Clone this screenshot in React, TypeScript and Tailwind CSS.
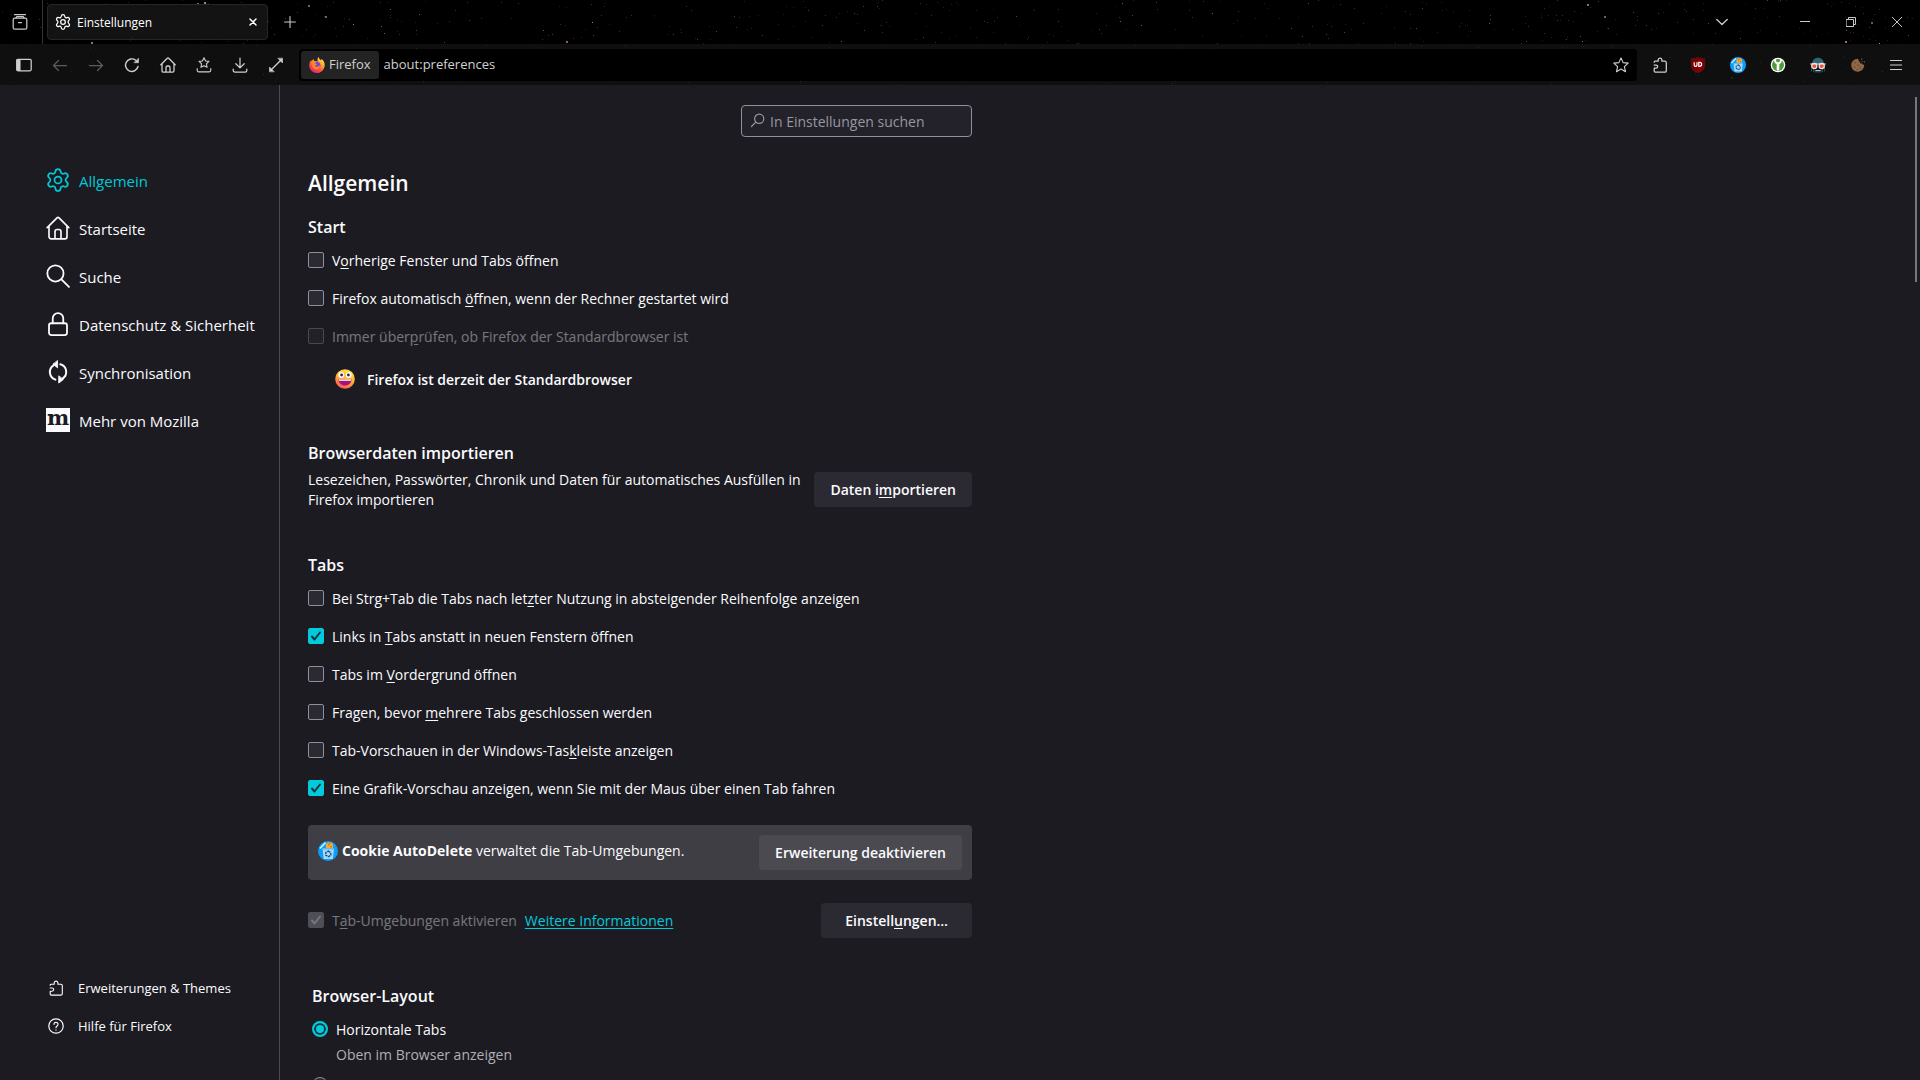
import type { ReactNode } from "react";

type IconProps = { className?: string };

function Line({ className = "size-4", width = 1.25, box = "0 0 16 16", children }: { className?: string; width?: number; box?: string; children: ReactNode }) {
  return (
    <svg viewBox={box} className={className} fill="none" stroke="currentColor" strokeWidth={width} strokeLinecap="round" strokeLinejoin="round" aria-hidden="true">
      {children}
    </svg>
  );
}

/* ---------- line icons ---------- */

const GearIcon = ({ className, width = 1.9 }: IconProps & { width?: number }) => (
  <Line className={className} width={width} box="1 1 22 22">
    <path d="M9.671 4.136a2.34 2.34 0 0 1 4.659 0 2.34 2.34 0 0 0 3.319 1.915 2.34 2.34 0 0 1 2.33 4.033 2.34 2.34 0 0 0 0 3.831 2.34 2.34 0 0 1-2.33 4.033 2.34 2.34 0 0 0-3.319 1.915 2.34 2.34 0 0 1-4.659 0 2.34 2.34 0 0 0-3.32-1.915 2.34 2.34 0 0 1-2.33-4.033 2.34 2.34 0 0 0 0-3.831A2.34 2.34 0 0 1 6.35 6.051a2.34 2.34 0 0 0 3.319-1.915" />
    <circle cx="12" cy="12" r="3.2" />
  </Line>
);
const HomeIcon = ({ className, width = 1.3 }: IconProps & { width?: number }) => (
  <Line className={className} width={width}>
    <path d="M.8 7.7 7.3 1.2a1 1 0 0 1 1.4 0l6.5 6.5M2 6.8v7a1.4 1.4 0 0 0 1.4 1.4h9.2a1.4 1.4 0 0 0 1.4-1.4v-7M6 15v-4.500a1.500 1.500 0 0 1 1.500-1.500h1a1.500 1.500 0 0 1 1.500 1.500V15" />
  </Line>
);
const SearchIcon = ({ className }: IconProps) => (
  <Line className={className} width={1.2}>
    <circle cx="6.300" cy="6.300" r="5.400" />
    <path d="m10.300 10.300 5 5" />
  </Line>
);
const LockIcon = ({ className }: IconProps) => (
  <Line className={className} width={1.2}>
    <path d="M4.500 7.500V4.200a3.500 3.500 0 0 1 7 0v3.300" />
    <rect x="2" y="7.500" width="12" height="7.900" rx="1.500" />
  </Line>
);
const SyncIcon = ({ className }: IconProps) => (
  <Line className={className} width={1.3}>
    <path d="M5 3.600a5.300 5.300 0 0 0 1.300 9.500M11 12.400A5.300 5.300 0 0 0 9.500 2.800" />
    <path d="M7.700.6v4.600L4.800 2.900zM8.500 10.800v4.600l2.900-2.300z" fill="currentColor" strokeWidth=".6" />
  </Line>
);
const PuzzleIcon = ({ className, width = 1.25 }: IconProps & { width?: number }) => (
  <Line className={className} width={width}>
    <path d="M2.200 5.200a1 1 0 0 1 1-1h3V2.600a1.900 1.900 0 0 1 3.700 0v1.600h3a1.400 1.400 0 0 1 1.400 1.400v8.200a1.300 1.300 0 0 1-1.300 1.300H3.200a1 1 0 0 1-1-1v-2.900h1.900a1.600 1.600 0 0 0 0-3.200H2.200" />
  </Line>
);
const HelpIcon = ({ className }: IconProps) => (
  <Line className={className} width={1.2}>
    <circle cx="8" cy="8" r="7.200" />
    <path d="M6 6.300a2 2 0 1 1 3.200 1.600c-.8.600-1.200.8-1.200 1.800M8 11.900v.2" />
  </Line>
);
const MozillaIcon = () => (
  <span className="flex size-6 shrink-0 justify-center bg-[#fbfbfe] font-['DejaVu_Serif',serif] text-[21px] leading-5 font-bold text-[#1c1b22]" aria-hidden="true">
    m
  </span>
);
const StarIcon = ({ className }: IconProps) => (
  <Line className={className} width={1.1}>
    <path d="m8 .9 2.100 4.700 5.100.5-3.800 3.500 1.100 5.100L8 12.100l-4.500 2.600 1.100-5.100L.8 6.100l5.100-.5z" />
  </Line>
);
const RecentIcon = () => (
  <Line className="size-4">
    <path d="M2.500.7h11" />
    <rect x="1.200" y="4.200" width="13.600" height="11" rx="1.500" />
    <path d="M6.500 8.500h3M4 3.800 5 2.500h6l1 1.300" />
  </Line>
);
const SidebarIcon = () => (
  <Line className="size-4">
    <rect x=".8" y="2.300" width="14.400" height="11.500" rx="1.200" />
    <path d="M1 2.500h3.200v11H1z" fill="currentColor" strokeWidth=".6" />
  </Line>
);
const BackIcon = () => (
  <Line className="size-4"><path d="M14.500 8.500h-13M6.500 3.500l-5 5 5 5" /></Line>
);
const ForwardIcon = () => (
  <Line className="size-4"><path d="M1.500 8.500h13M9.500 3.500l5 5-5 5" /></Line>
);
const ReloadIcon = () => (
  <Line className="size-4" width={1.400}>
    <path d="M14 9.500a6.300 6.300 0 1 1-2.300-6.300" />
    <path d="M14.500 1.500v4.200h-4.200z" fill="currentColor" strokeWidth=".6" />
  </Line>
);
const BookmarksIcon = () => (
  <Line className="size-4" width={1.100}>
    <path d="m8 .8 1.600 3.200 3.300.4-2.500 2.400.7 3.500L8 8.700l-3.100 1.600.7-3.500-2.500-2.400 3.300-.4z" />
    <path d="M1.200 11.500v1.800a1.600 1.600 0 0 0 1.600 1.600h10.400a1.600 1.600 0 0 0 1.600-1.600v-1.800" />
  </Line>
);
const DownloadIcon = () => (
  <Line className="size-4">
    <path d="M8 1.200v9.500M3.800 6.700 8 10.900l4.200-4.200M1.200 12v1.400a1.600 1.600 0 0 0 1.600 1.600h10.400a1.600 1.600 0 0 0 1.600-1.600V12" />
  </Line>
);
const ExpandIcon = () => (
  <Line className="size-4" width={1.400}>
    <path d="m3.500 12.500 9-9" />
    <path d="M14.500 1.500v4.500L10 1.500zM1.500 14.500V10L6 14.500z" fill="currentColor" strokeWidth=".6" />
  </Line>
);
const CloseIcon = () => (
  <Line className="size-2.5" width={1.500} box="0 0 10 10"><path d="m2 2 6 6M8 2 2 8" /></Line>
);
const PlusIcon = () => (
  <Line className="size-3" width={1.5}><path d="M8 .8v14.400M.8 8h14.400" /></Line>
);
const MenuIcon = () => (
  <Line className="size-4" width={1.200}><path d="M2.500 3.500h11M2.500 8h11M2.500 12.500h11" /></Line>
);

/* ---------- colour icons ---------- */

const FirefoxLogo = () => (
  <svg viewBox="0 0 16 16" className="size-4" aria-hidden="true">
    <defs>
      <linearGradient id="fx" x1=".85" y1="0" x2=".15" y2="1">
        <stop offset="0" stopColor="#fff44f" />
        <stop offset=".35" stopColor="#ffa52e" />
        <stop offset=".65" stopColor="#ff4a42" />
        <stop offset="1" stopColor="#e31587" />
      </linearGradient>
    </defs>
    <path d="M9.600 0c.3 1.500 1.100 2.300 2.200 3.200.5-.2.7-.5.700-1.100C14.600 3.500 16 6 15.700 8.700 15.300 12.800 12 16 8 16 3.700 16 .3 12.700.2 8.500c0-2 .6-4 2-5.400l.2 1.200C3 3.300 3.800 2.500 4.700 2c0 .9.200 1.500.800 2.100 1.400-.2 2.600 0 3.300.5C8.300 3 8.300 1.200 9.600 0z" fill="url(#fx)" />
    <circle cx="7.900" cy="8.300" r="3.500" fill="#7a3fe0" />
    <path d="M2.400 4.600c1.800-.7 4-.6 5.100.7-.7.100-1.400.4-1.700 1.100.9.300 1.800.1 2.500.4-.4 1.300-1.900 1.300-2.400 2.300 1.700 1.600 3.800.6 4.800-1.100.8 3-1.600 4.900-4 4.500C3.900 12 2.100 9 2.400 4.600z" fill="#ff8a1c" />
  </svg>
);
const UblockIcon = () => (
  <svg viewBox="0 0 16 16" className="size-4" aria-hidden="true">
    <path d="M8 .2C6 1.300 3.500 1.700 1.200 1.700v6.500c0 3.800 2.900 6.300 6.800 7.700 3.900-1.400 6.800-3.900 6.800-7.700V1.700C12.500 1.700 10 1.300 8 .2z" fill="#800000" stroke="#5c2020" strokeWidth=".5" />
    <path d="M4.200 5.200v2.700a1.400 1.400 0 0 0 2.800 0V5.200M8.800 5.300h.8a2 2 0 0 1 0 4h-.8z" fill="none" stroke="#fff" strokeWidth="1.200" />
  </svg>
);
const CookieAutoDeleteIcon = ({ className = "size-4" }: IconProps) => (
  <svg viewBox="0 0 16 16" className={className} aria-hidden="true">
    <circle cx="8" cy="8" r="8" fill="#0a9dfb" />
    <path d="M1.500 6 6 1.300" stroke="#d7f0ff" strokeWidth="1.200" />
    <circle cx="9.200" cy="3.900" r="3" fill="#f5a733" />
    <path d="M8 3h1M10 4.500h1M9 2h.8" stroke="#a9661b" strokeWidth=".9" />
    <path d="M3.600 6.200h9.200l-.9 8.200H4.500z" fill="#a5d8f7" />
    <path d="M3.400 5.700h9.600v1.100H3.400z" fill="#62b8ee" />
    <path d="m8.200 8 1.900 1.300.2 2-2.100 1.300-2-1.300v-2z" fill="none" stroke="#174f83" strokeWidth="1.100" strokeDasharray="1.900 .6" />
  </svg>
);
const KeeIcon = () => (
  <svg viewBox="0 0 16 16" className="size-4" aria-hidden="true">
    <circle cx="8" cy="8" r="7.300" fill="#fff" />
    <circle cx="8" cy="8" r="6" fill="#4f9a37" />
    <path d="M4 2.500c0 2.500 1 4 2.700 4.800v5.500L8 14l1.300-1.200V7.300C11 6.500 12 5 12 2.500L10 1.500v2.700L8 5.500 6 4.200V1.500z" fill="#fff" />
  </svg>
);
const MaskIcon = () => (
  <svg viewBox="0 0 16 16" className="size-4" aria-hidden="true">
    <path d="M2 7.500C2 3.300 4.500.7 8 .7s6 2.600 6 6.800z" fill="#2d6478" />
    <path d="M1.500 7v7.500M3.500 11v4M14.500 7v7.500M12.500 11v4" stroke="#234c63" strokeWidth="1" />
    <path d="M4.500 13h7v2.500h-7z" fill="#23485a" />
    <path d="M5.500 13.500h5" stroke="#a9cbd7" strokeWidth="1" />
    <circle cx="4.300" cy="9" r="2.600" fill="#e8563e" stroke="#f3e1dc" strokeWidth="1.200" />
    <circle cx="11.700" cy="9" r="2.600" fill="#e8563e" stroke="#f3e1dc" strokeWidth="1.200" />
    <path d="M.2 7h15.600" stroke="#f3e1dc" strokeWidth="1" />
  </svg>
);
const CookieIcon = () => (
  <svg viewBox="0 0 16 16" className="size-4" aria-hidden="true">
    <path d="M8 1.800c.6 1 .4 2.200 1.600 2.600.1 1.600 1.200 2.100 2.500 2 .4 1 1.200 1.300 2.100 1.300A6.500 6.500 0 1 1 8 1.800z" fill="#8f6747" />
    <path d="M11 1.500h1.300v1.300H11zM13.800 4.300H15v1.200h-1.200zM11.500 4h1v1h-1z" fill="#7b573c" />
    <path d="M4.500 5h1.200v1.200H4.500zM7.500 7.500h1.300v1.300H7.500zM4 9.500h1.200v1.200H4zM9.500 10.500h1.200v1.200H9.500zM6.700 12h1v1h-1z" fill="#5a3e29" />
  </svg>
);
const SmileyIcon = () => (
  <svg viewBox="0 0 20 20" className="size-5" aria-hidden="true">
    <defs>
      <linearGradient id="smile" x1=".7" y1="0" x2=".3" y2="1">
        <stop offset="0" stopColor="#ffe14a" />
        <stop offset=".5" stopColor="#ffb02e" />
        <stop offset="1" stopColor="#ff4f5e" />
      </linearGradient>
    </defs>
    <circle cx="10" cy="10" r="9.800" fill="url(#smile)" />
    <circle cx="6.300" cy="6" r="2.900" fill="#fff" />
    <circle cx="13.700" cy="6" r="2.900" fill="#fff" />
    <circle cx="6.600" cy="6" r="1.400" fill="#3a2340" />
    <circle cx="13.400" cy="6" r="1.400" fill="#3a2340" />
    <path d="M3.500 10.500h13c0 3.600-2.800 6-6.500 6s-6.500-2.400-6.500-6z" fill="#a3127f" />
    <path d="M4 10.500h12v1.300H4z" fill="#fff" />
  </svg>
);

/* ---------- night sky behind the toolbars ---------- */

const BRIGHT_STARS = [
  [131, 37, 2, "#a5694d"], [91, 42, 2, "#77777a"], [197, 3, 2, "#6a6a6a"], [204, 2, 2, "#858585"],
  [308, 5, 2, "#666"], [325, 16, 2, "#666"], [353, 24, 1, "#888"], [566, 41, 2, "#9c5f4a"],
  [592, 22, 1, "#888"], [1587, 4, 2, "#777"], [1604, 16, 2, "#666"], [1871, 22, 2, "#5c5c5c"],
  [1845, 41, 2, "#b06a4c"], [1582, 41, 1, "#777"], [1731, 77, 2, "#4a3232"], [1879, 43, 1, "#999"],
] as const;

function makeStars(count: number) {
  let seed = 7;
  const next = () => (seed = (seed * 16807) % 2147483647) / 2147483647;
  const tones = ["#202020", "#303030", "#444444", "#606060"];
  return Array.from({ length: count }, () => ({ x: Math.floor(next() * 1920), y: Math.floor(next() * 85), tone: tones[Math.floor(next() * next() * 4)] }));
}
const STARS = makeStars(800);

const NightSky = () => (
  <svg className="pointer-events-none absolute inset-0 size-full" viewBox="0 0 1920 85" preserveAspectRatio="xMidYMin slice" shapeRendering="crispEdges" aria-hidden="true">
    {STARS.map((s, i) => <rect key={i} x={s.x} y={s.y} width="1" height="1" fill={s.tone} />)}
    {BRIGHT_STARS.map(([x, y, size, tone]) => <rect key={`${x}-${y}`} x={x} y={y} width={size} height={size} fill={tone} />)}
  </svg>
);

/* ---------- browser chrome ---------- */

function ToolButton({ label, children, className = "w-9", disabled }: { label: string; children: ReactNode; className?: string; disabled?: boolean }) {
  return (
    <button type="button" aria-label={label} disabled={disabled} className={`flex h-8 shrink-0 items-center justify-center disabled:opacity-40 ${className}`}>
      {children}
    </button>
  );
}

function TabStrip() {
  return (
    <div className="relative flex h-11 items-center text-[#c8c8c8]">
      <ToolButton label="Zuletzt verwendete Tabs" className="w-10"><RecentIcon /></ToolButton>
      <div className="mr-1 ml-0.5 h-full w-px bg-[#333]" />
      <div className="flex h-9 w-[221px] items-center gap-1.5 rounded-[4px] border border-[#262626] bg-[#151515]/90 px-[7px] text-white">
        <GearIcon className="size-4" width={1.7} />
        <span className="flex-1 pt-px text-[12px]">Einstellungen</span>
        <button type="button" aria-label="Tab schließen" className="px-0.5"><CloseIcon /></button>
      </div>
      <ToolButton label="Neuer Tab" className="ml-1 w-9"><PlusIcon /></ToolButton>
      <div className="ml-auto flex items-center">
        <ToolButton label="Alle Tabs auflisten" className="mr-[37px] w-11.5">
          <Line className="size-3" width={1.4} box="0 0 12 12"><path d="m.8 3.500 5.200 5 5.200-5" /></Line>
        </ToolButton>
        <ToolButton label="Minimieren" className="w-11.5">
          <Line className="size-2.5" width={1} box="0 0 10 10"><path d="M0 4.500h10" /></Line>
        </ToolButton>
        <ToolButton label="Wiederherstellen" className="w-11.5">
          <Line className="size-2.5" width={1} box="0 0 10 10"><path d="M.5 2.500h7v7h-7zM2.500 2.500v-2h7v7h-2" /></Line>
        </ToolButton>
        <ToolButton label="Schließen" className="w-11.5">
          <Line className="size-2.5" width={1} box="0 0 10 10"><path d="m0 0 10 10M10 0 0 10" /></Line>
        </ToolButton>
      </div>
    </div>
  );
}

function NavBar() {
  return (
    <div className="relative flex h-[41px] items-center bg-[#151515]/70 pl-1.5 text-[#d0d0d0]">
      <ToolButton label="Seitenleiste"><SidebarIcon /></ToolButton>
      <ToolButton label="Zurück" disabled><BackIcon /></ToolButton>
      <ToolButton label="Vor" disabled><ForwardIcon /></ToolButton>
      <ToolButton label="Neu laden"><ReloadIcon /></ToolButton>
      <ToolButton label="Startseite"><HomeIcon className="size-4" /></ToolButton>
      <ToolButton label="Lesezeichen"><BookmarksIcon /></ToolButton>
      <ToolButton label="Downloads"><DownloadIcon /></ToolButton>
      <ToolButton label="Vollbild"><ExpandIcon /></ToolButton>
      <div className="ml-[5px] flex h-8 flex-1 items-center rounded-[4px] bg-black py-0.5 pl-0.5">
        <button type="button" className="flex h-7 items-center gap-1 rounded-[3px] bg-[#232323] px-2 text-[13px]">
          <FirefoxLogo />
          <span>Firefox</span>
        </button>
        <input aria-label="Adresse" defaultValue="about:preferences" className="ml-[5px] min-w-0 flex-1 bg-transparent text-[13px] outline-none" />
        <ToolButton label="Lesezeichen hinzufügen" className="w-8"><StarIcon className="size-4" /></ToolButton>
      </div>
      <div className="ml-[3px] flex shrink-0">
        <ToolButton label="Erweiterungen" className="w-10"><PuzzleIcon className="size-4" /></ToolButton>
        <ToolButton label="uBlock Origin" className="w-9"><UblockIcon /></ToolButton>
        <ToolButton label="Cookie AutoDelete" className="ml-0.5 w-10"><CookieAutoDeleteIcon /></ToolButton>
        <ToolButton label="Passwörter" className="w-10"><KeeIcon /></ToolButton>
        <ToolButton label="Privatsphäre" className="w-10"><MaskIcon /></ToolButton>
        <ToolButton label="Cookies" className="w-10"><CookieIcon /></ToolButton>
        <ToolButton label="Menü" className="mr-1.5 w-9"><MenuIcon /></ToolButton>
      </div>
    </div>
  );
}

/* ---------- settings page ---------- */

const CATEGORIES = [
  { label: "Allgemein", icon: <GearIcon className="size-6" width={1.6} />, active: true },
  { label: "Startseite", icon: <HomeIcon className="size-6" width={1.1} /> },
  { label: "Suche", icon: <SearchIcon className="size-6" /> },
  { label: "Datenschutz & Sicherheit", icon: <LockIcon className="size-6" /> },
  { label: "Synchronisation", icon: <SyncIcon className="size-6" /> },
  { label: "Mehr von Mozilla", icon: <MozillaIcon /> },
];

function Sidebar() {
  return (
    <nav className="flex w-[280px] shrink-0 flex-col border-r border-[#4a494f] pt-[71px] pb-[34px] pl-[46px]">
      {CATEGORIES.map((c) => (
        <a key={c.label} href="#" className={`flex h-12 items-center gap-[9px] text-[15px] whitespace-nowrap ${c.active ? "text-[#00c8d7]" : ""}`}>
          {c.icon}
          <span className="pt-0.5">{c.label}</span>
        </a>
      ))}
      <div className="mt-auto text-[13px]">
        <a href="#" className="flex h-[38px] items-center gap-[14px] pl-0.5"><PuzzleIcon className="mb-0.5 size-4" width={1.1} />Erweiterungen &amp; Themes</a>
        <a href="#" className="flex h-[38px] items-center gap-[14px] pl-0.5"><HelpIcon className="mb-0.5 size-4" />Hilfe für Firefox</a>
      </div>
    </nav>
  );
}

function Check({ children, checked, disabled }: { children: ReactNode; checked?: boolean; disabled?: boolean }) {
  return (
    <label className={`flex h-[38px] items-center gap-2 ${disabled ? "opacity-40" : ""}`}>
      <span className="grid size-4 shrink-0">
        <input
          type="checkbox"
          defaultChecked={checked}
          disabled={disabled}
          className="col-start-1 row-start-1 size-4 appearance-none rounded-[2px] border border-[#8f8f9d] bg-[#2b2a33] checked:border-[#00cadb] checked:bg-[#00cadb] checked:disabled:border-[#9a9aa8] checked:disabled:bg-[#9a9aa8]"
        />
        {checked && (
          <svg viewBox="0 0 16 16" className={`pointer-events-none col-start-1 row-start-1 size-4 ${disabled ? "text-white" : "text-[#15333c]"}`} fill="none" stroke="currentColor" strokeWidth="2" strokeLinecap="round" strokeLinejoin="round" aria-hidden="true">
            <path d="m4 8.500 2.500 3L12 4.500" />
          </svg>
        )}
      </span>
      <span>{children}</span>
    </label>
  );
}

const radioClass = "size-4 shrink-0 appearance-none rounded-full border border-[#8f8f9d] bg-[#2b2a33] checked:border-2 checked:border-[#00cadb] checked:bg-[#00cadb] checked:shadow-[inset_0_0_0_2px_#15333c]";

const Heading = ({ children }: { children: ReactNode }) => <h2 className="text-[16px] leading-6 font-semibold">{children}</h2>;
const K = ({ children }: { children: ReactNode }) => <u className="underline-offset-2">{children}</u>;
const Button = ({ children, className = "bg-[#2b2a33]" }: { children: ReactNode; className?: string }) => (
  <button type="button" className={`h-[35px] shrink-0 rounded-[4px] px-4 font-semibold whitespace-nowrap ${className}`}>{children}</button>
);

function Preferences() {
  return (
    <main className="min-w-0 flex-1 overflow-hidden pl-7">
      <div className="max-w-[664px] pt-5 text-[14px]">
        <div className="flex justify-end">
          <label className="flex h-8 w-[231px] items-center gap-1 rounded-[4px] border border-[#8f8f9d] bg-[#23222b] px-2 text-[#98979f]">
            <svg viewBox="0 0 16 16" className="size-4 shrink-0" fill="none" stroke="currentColor" strokeWidth="1.200" strokeLinecap="round" aria-hidden="true">
              <circle cx="9.200" cy="5.800" r="4.600" />
              <path d="m5.800 9.200-4.300 4.300" />
            </svg>
            <input type="text" aria-label="In Einstellungen suchen" placeholder="In Einstellungen suchen" className="min-w-0 flex-1 bg-transparent outline-none placeholder:text-[#98979f]" />
          </label>
        </div>

        <h1 className="mt-8 text-[21px] leading-7 font-semibold">Allgemein</h1>

        <section className="mt-[18px]">
          <Heading>Start</Heading>
          <div className="mt-0.5">
            <Check>V<K>o</K>rherige Fenster und Tabs öffnen</Check>
            <Check>Firefox automatisch <K>ö</K>ffnen, wenn der Rechner gestartet wird</Check>
            <Check disabled>Immer über<K>p</K>rüfen, ob Firefox der Standardbrowser ist</Check>
          </div>
          <p className="mt-1 flex h-10 items-center gap-3 pl-[27px] font-semibold"><SmileyIcon />Firefox ist derzeit der Standardbrowser</p>
        </section>

        <section className="mt-[42px]">
          <Heading>Browserdaten importieren</Heading>
          <div className="mt-1 flex items-center justify-between gap-3">
            <p className="pt-px leading-5">Lesezeichen, Passwörter, Chronik und Daten für automatisches Ausfüllen in Firefox importieren</p>
            <Button>Daten i<K>m</K>portieren</Button>
          </div>
        </section>

        <section className="mt-[43px]">
          <Heading>Tabs</Heading>
          <div className="mt-0.5">
            <Check>Bei Strg+Tab die Tabs nach let<K>z</K>ter Nutzung in absteigender Reihenfolge anzeigen</Check>
            <Check checked>Links in <K>T</K>abs anstatt in neuen Fenstern öffnen</Check>
            <Check>Tabs im <K>V</K>ordergrund öffnen</Check>
            <Check>Fragen, bevor <K>m</K>ehrere Tabs geschlossen werden</Check>
            <Check>Tab-Vorschauen in der Windows-Tas<K>k</K>leiste anzeigen</Check>
            <Check checked>Eine Grafik-Vorschau anzeigen, wenn Sie mit der Maus über einen Tab fahren</Check>
          </div>
          <div className="mt-[18px] flex h-[55px] items-center justify-between rounded-[4px] bg-[#3f3e44] px-2.5">
            <p className="flex items-center gap-1 pb-1">
              <CookieAutoDeleteIcon className="size-5" />
              <span><b>Cookie AutoDelete</b> verwaltet die Tab-Umgebungen.</span>
            </p>
            <Button className="bg-[#4b4a50]">Erweiterung deaktivieren</Button>
          </div>
          <div className="mt-[21px] flex items-center">
            <Check checked disabled>T<K>a</K>b-Umgebungen aktivieren</Check>
            <a href="#" className="ml-2 text-[#00cadb] underline underline-offset-2">Weitere Informationen</a>
            <div className="ml-auto flex"><Button className="bg-[#2b2a33] px-6">Einstell<K>u</K>ngen…</Button></div>
          </div>
        </section>

        <section className="mt-[45px] pl-1">
          <Heading>Browser-Layout</Heading>
          <div className="mt-[9px]">
            <label className="flex h-6 items-center gap-2">
              <input type="radio" name="layout" defaultChecked className={radioClass} />
              Horizontale Tabs
            </label>
            <p className="mt-0.5 pl-6 leading-6 text-[#b0afb6]">Oben im Browser anzeigen</p>
            <div className="flex pt-2.5">
              <input type="radio" name="layout" aria-label="Vertikale Tabs" className={radioClass} />
            </div>
          </div>
        </section>
      </div>
    </main>
  );
}

export default function App() {
  return (
    <div className="flex h-screen flex-col overflow-hidden bg-[#1c1b22] font-['Open_Sans','Noto_Sans',sans-serif] text-[#fbfbfe]">
      <header className="relative shrink-0 bg-black">
        <NightSky />
        <TabStrip />
        <NavBar />
      </header>
      <div className="flex min-h-0 flex-1">
        <Sidebar />
        <Preferences />
        <div className="mt-3 mr-[3px] h-[185px] w-0.5 shrink-0 bg-[#77767b]" aria-hidden="true" />
      </div>
    </div>
  );
}
